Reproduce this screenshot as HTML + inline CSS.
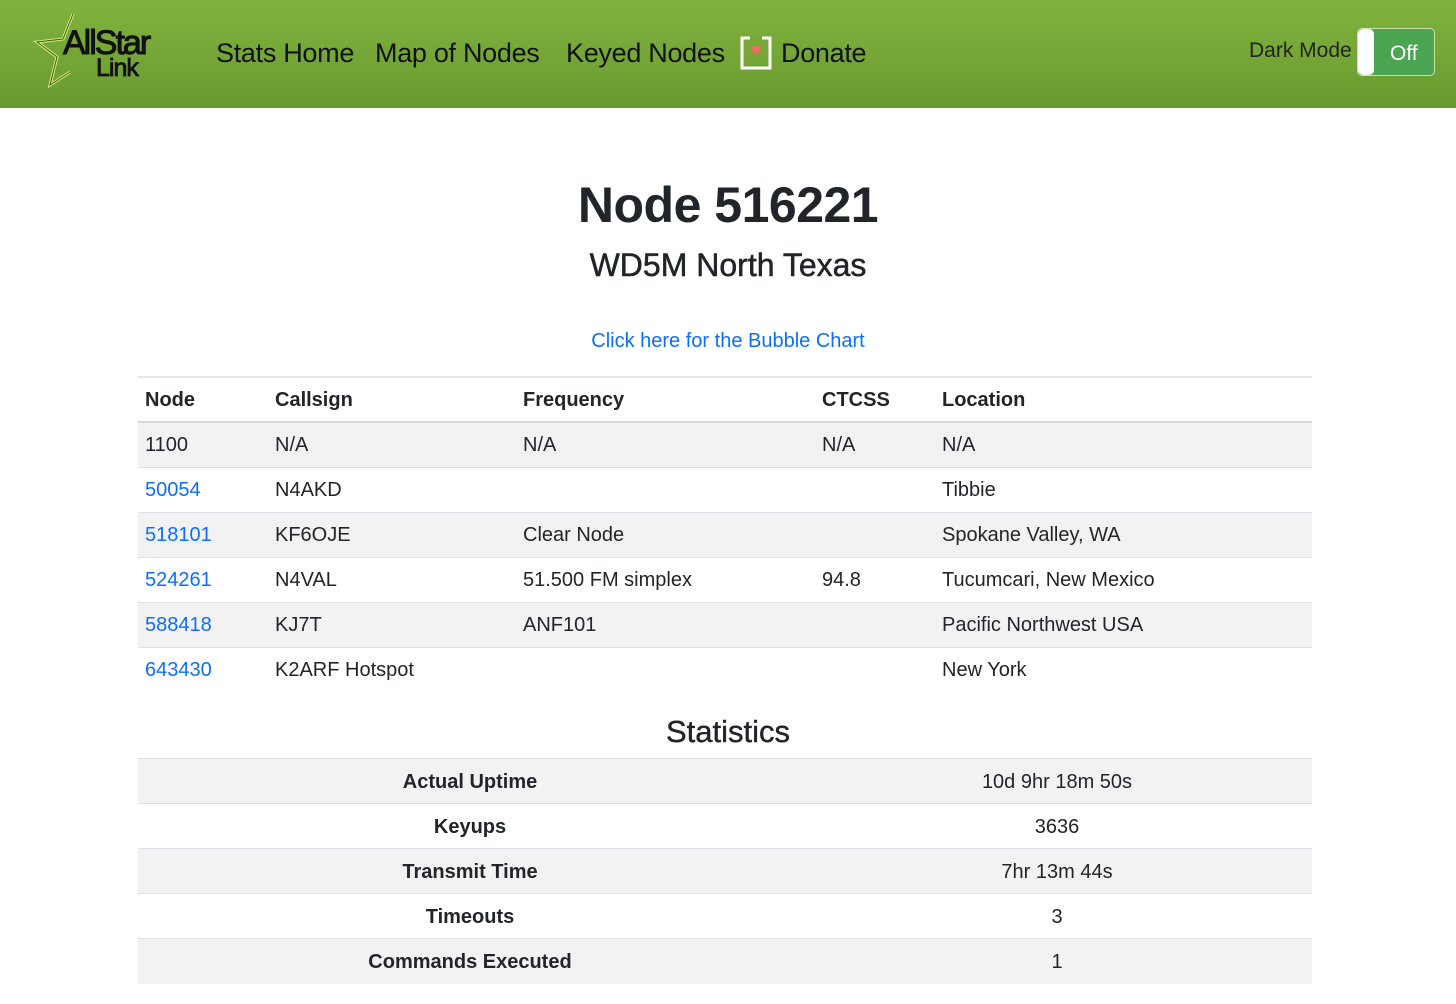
<!DOCTYPE html>
<html><head><meta charset="utf-8"><style>
*{box-sizing:border-box;margin:0;padding:0}
body{width:1456px;height:1004px;overflow:hidden;background:#fff;font-family:"Liberation Sans",sans-serif;color:#212529}
.nav{height:108px;background:linear-gradient(#80b33f,#6a9a2f);position:relative}
.nav a{position:absolute;top:38px;font-size:27px;color:#111;text-decoration:none;letter-spacing:-0.3px}
.logo{position:absolute;left:30px;top:8px}
.dm{position:absolute;left:1249px;top:39px;font-size:21px;color:#222}
.tog{position:absolute;left:1357px;top:28px;width:78px;height:48px;background:#4ba553;border:1px solid #c9e3a8;border-radius:5px}
.tog .k{position:absolute;left:0;top:0;width:16px;height:46px;background:#fff;border-radius:5px}
.tog span{position:absolute;left:32px;top:13px;color:#fff;font-size:21px}
h1{position:absolute;top:176px;width:100%;text-align:center;font-size:50px;font-weight:bold;letter-spacing:-0.5px}
h2{position:absolute;top:247px;width:100%;text-align:center;font-size:32px;font-weight:normal;-webkit-text-stroke:0.5px #212529}
.bl{position:absolute;top:330px;width:100%;text-align:center;font-size:20px;color:#0d6efd}
table{position:absolute;left:138px;width:1174px;border-collapse:collapse;font-size:20px}
td,th{height:45px;padding:2px 7px 0;text-align:left;border-top:1px solid #dee2e6;vertical-align:middle}
th{font-weight:bold}
.s td{background:#f2f2f2}
.lk{color:#0d6efd}
#t1{top:376px;border-top:2px solid #e6e6e6}
#t1 thead th{border-bottom:2px solid #d5d8db}
.st{position:absolute;top:714px;width:100%;text-align:center;font-size:31px;-webkit-text-stroke:0.4px #212529}
#t2{top:758px}
#t2 td{text-align:center}
</style></head><body>
<div class="nav">
<svg class="logo" width="140" height="90" viewBox="30 8 140 90">
<path d="M73,14 L63,39 L37,42 L57,57 L50,85 L70,72" fill="none" stroke="#d7ee78" stroke-width="3" stroke-linejoin="miter"/>
<path d="M73,14 L63,39 L37,42 L57,57 L50,85 L70,72" fill="none" stroke="#3c5a14" stroke-width="1"/>
<text x="63" y="54" font-family="Liberation Sans" font-size="34" fill="#111" stroke="#111" stroke-width="1" letter-spacing="-2">AllStar</text>
<text x="96" y="76" font-family="Liberation Sans" font-size="25" fill="#111" stroke="#111" stroke-width="0.8" letter-spacing="-1">Link</text>
</svg>
<a style="left:216px">Stats Home</a>
<a style="left:375px">Map of Nodes</a>
<a style="left:566px">Keyed Nodes</a>
<svg style="position:absolute;left:740px;top:36px" width="33" height="34" viewBox="0 0 33 34"><rect x="2" y="2" width="28" height="30" fill="none" stroke="#fff" stroke-width="3"/><rect x="10" y="0" width="12" height="5" fill="#76a836"/><path d="M16,20 L11,13 Q11,10 13.5,10 Q16,10 16,13 Q16,10 18.5,10 Q21,10 21,13 Z" fill="#ef6b63"/></svg>
<a style="left:781px">Donate</a>
<div class="dm">Dark Mode</div>
<div class="tog"><div class="k"></div><span>Off</span></div>
</div>
<h1>Node 516221</h1>
<h2>WD5M North Texas</h2>
<div class="bl">Click here for the Bubble Chart</div>
<table id="t1">
<thead><tr><th style="width:130px">Node</th><th style="width:248px">Callsign</th><th style="width:299px">Frequency</th><th style="width:120px">CTCSS</th><th>Location</th></tr></thead>
<tbody>
<tr class="s"><td>1100</td><td>N/A</td><td>N/A</td><td>N/A</td><td>N/A</td></tr>
<tr><td class="lk">50054</td><td>N4AKD</td><td></td><td></td><td>Tibbie</td></tr>
<tr class="s"><td class="lk">518101</td><td>KF6OJE</td><td>Clear Node</td><td></td><td>Spokane Valley, WA</td></tr>
<tr><td class="lk">524261</td><td>N4VAL</td><td>51.500 FM simplex</td><td>94.8</td><td>Tucumcari, New Mexico</td></tr>
<tr class="s"><td class="lk">588418</td><td>KJ7T</td><td>ANF101</td><td></td><td>Pacific Northwest USA</td></tr>
<tr><td class="lk">643430</td><td>K2ARF Hotspot</td><td></td><td></td><td>New York</td></tr>
</tbody></table>
<div class="st">Statistics</div>
<table id="t2">
<tr class="s"><td style="width:664px;font-weight:bold">Actual Uptime</td><td>10d 9hr 18m 50s</td></tr>
<tr><td style="font-weight:bold">Keyups</td><td>3636</td></tr>
<tr class="s"><td style="font-weight:bold">Transmit Time</td><td>7hr 13m 44s</td></tr>
<tr><td style="font-weight:bold">Timeouts</td><td>3</td></tr>
<tr class="s"><td style="font-weight:bold">Commands Executed</td><td>1</td></tr>
</table>
</body></html>
